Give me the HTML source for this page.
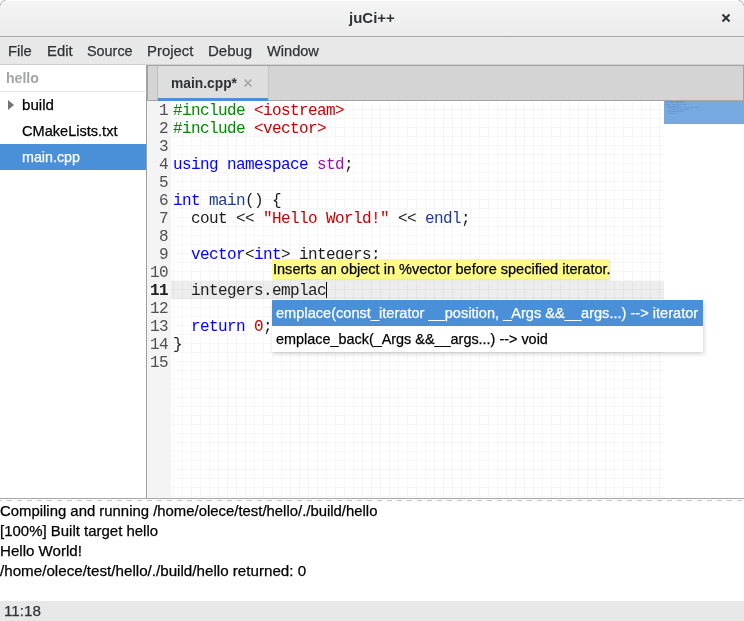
<!DOCTYPE html>
<html><head><meta charset="utf-8">
<style>
*{margin:0;padding:0;box-sizing:border-box}
html,body{width:744px;height:621px;overflow:hidden;background:#fff}
body{position:relative;font-family:"Liberation Sans",sans-serif;color:#000}
.a{position:absolute}
.t{position:absolute;white-space:pre;line-height:20px;will-change:transform;-webkit-text-stroke:0.25px currentColor}
#title{left:0;top:0;width:744px;height:37px;background:linear-gradient(#f5f5f5,#ececec);border-bottom:1px solid #a6a6a6;border-radius:5px 5px 0 0;box-shadow:inset 0 1px #fbfbfb}
#menu{left:0;top:37px;width:744px;height:28px;background:#e8e8e8;border-bottom:1px solid #cfcfcf}
.mi{font-size:14px;color:#2e3436;top:41px}
#side{left:0;top:65px;width:146px;height:433px;background:#fff}
#tabbar{left:146px;top:65px;width:598px;height:36px;background:#d4d4d4;border:1px solid #a3a3a3;border-left:2px solid #a3a3a3}
#tab{left:158px;top:66px;width:110px;height:35px;background:#dedede;border-bottom:3px solid #4a90d9}
#gutter{left:147px;top:101px;width:24px;height:397px;background:#f4f4f4}
#vborder{left:146px;top:65px;width:1px;height:433px;background:#a0a0a0}
#grid{left:171px;top:101px;width:493px;height:397px;
 background-image:linear-gradient(90deg,#f6f6f6 1px,transparent 1px),linear-gradient(#f6f6f6 1px,transparent 1px);
 background-size:9px 9px;background-position:2px 8px}
#hborder{left:0;top:498px;width:744px;height:1px;background:#a8a8a8}
#dash{left:0;top:500px;width:744px;height:1px;background-image:linear-gradient(90deg,#c4c4c4 2px,transparent 2px,transparent 7px,#c4c4c4 7px);background-size:10px 1px}
#status{left:0;top:601px;width:744px;height:20px;background:#e8e8e8}
.code{position:absolute;will-change:transform;left:173px;font-family:"Liberation Mono",monospace;font-size:16px;letter-spacing:-0.6px;line-height:18px;white-space:pre;color:#1e1e1e}
.ln{position:absolute;will-change:transform;left:147px;width:21px;text-align:right;font-family:"Liberation Mono",monospace;font-size:16px;letter-spacing:-0.6px;line-height:18px;color:#505050}
.g{color:#008a00}.r{color:#c80000}.b{color:#0000ff}.p{color:#9a10a8}.nb{color:#1f3b98}
</style></head><body>
<div id="title" class="a"></div>
<svg class="a" style="left:0;top:0" width="744" height="10"><path d="M0.5 5.5A5 5 0 0 1 5.5 0.5M738.5 0.5A5 5 0 0 1 743.5 5.5" fill="none" stroke="#b4b4b4" stroke-width="1"/></svg>
<div class="t" style="left:349px;top:8px;font-size:15px;font-weight:bold;color:#2e3436;-webkit-text-stroke:0">juCi++</div>
<svg class="a" style="left:720px;top:12px" width="12" height="12" viewBox="0 0 12 12"><path d="M2.5 2.5L9.5 9.5M9.5 2.5L2.5 9.5" stroke="#2e3436" stroke-width="2"/></svg>
<div id="menu" class="a"></div>
<div class="t mi" style="left:8px;font-size:14.8px">File</div>
<div class="t mi" style="left:47px;font-size:14.85px">Edit</div>
<div class="t mi" style="left:87px;font-size:14.4px">Source</div>
<div class="t mi" style="left:147px;font-size:14.9px">Project</div>
<div class="t mi" style="left:208px;font-size:15px">Debug</div>
<div class="t mi" style="left:267px;font-size:14.6px">Window</div>

<div id="side" class="a"></div>
<div class="t" style="left:6px;top:68px;font-size:14.1px;font-weight:bold;color:#a2a4a5;-webkit-text-stroke:0">hello</div>
<div class="a" style="left:0;top:91px;width:145px;height:1px;background:#e8e8e8"></div>
<svg class="a" style="left:7px;top:99px" width="8" height="12"><path d="M1 1L7 6L1 11Z" fill="#737373"/></svg>
<div class="t" style="left:22px;top:95px;font-size:15.1px">build</div>
<div class="t" style="left:22px;top:121px;font-size:14.57px">CMakeLists.txt</div>
<div class="a" style="left:0;top:144px;width:146px;height:26px;background:#4a90d9"></div>
<div class="t" style="left:22px;top:147px;font-size:14.3px;color:#fff">main.cpp</div>

<div id="tabbar" class="a"></div>
<div class="a" style="left:157px;top:66px;width:1px;height:34px;background:#bcbcbc"></div>
<div class="a" style="left:268px;top:66px;width:1px;height:34px;background:#c4c4c4"></div>
<div id="tab" class="a"></div>
<div class="t" style="left:171px;top:74px;font-size:13.8px;font-weight:bold;color:#2e3436;-webkit-text-stroke:0">main.cpp*</div>
<svg class="a" style="left:243px;top:78px" width="10" height="10"><path d="M1.5 1.5L8.5 8.5M8.5 1.5L1.5 8.5" stroke="#a4a4a4" stroke-width="1.6"/></svg>

<div id="gutter" class="a"></div>
<div id="grid" class="a"></div>
<div id="vborder" class="a"></div>
<div class="a" style="left:171px;top:281px;width:493px;height:18px;background:rgba(0,0,0,0.07)"></div>

<div class="ln" style="top:102px">1<br>2<br>3<br>4<br>5<br>6<br>7<br>8<br>9<br>10<br><b style="color:#222">11</b><br>12<br>13<br>14<br>15</div>
<div class="code" style="top:102px"><span class="g">#include</span> <span class="r">&lt;iostream&gt;</span>
<span class="g">#include</span> <span class="r">&lt;vector&gt;</span>

<span class="b">using</span> <span class="b">namespace</span> <span class="p">std</span>;

<span class="b">int</span> <span class="nb">main</span>() {
  cout &lt;&lt; <span class="r">"Hello World!"</span> &lt;&lt; <span class="nb">endl</span>;

  <span class="b">vector</span>&lt;<span class="b">int</span>&gt; integers;

  integers.emplac
<span>
</span>  <span class="b">return</span> <span class="r">0</span>;
}
</div>
<div class="a" style="left:326px;top:282px;width:1px;height:16px;background:#000"></div>

<!-- minimap -->
<div class="a" style="left:664px;top:101px;width:80px;height:397px;background:#fff"></div>
<div class="a" style="left:664px;top:101px;width:80px;height:23px;background:#75a9e0"></div>
<svg class="a" style="left:666px;top:101px" width="40" height="16"><g fill="#2a4a8a" fill-opacity="0.15"><rect x="0" y="0" width="8" height="1"/><rect x="9" y="0" width="10" height="1"/><rect x="0" y="1" width="8" height="1"/><rect x="9" y="1" width="8" height="1"/><rect x="0" y="3" width="5" height="1"/><rect x="6" y="3" width="9" height="1"/><rect x="16" y="3" width="4" height="1"/><rect x="0" y="5" width="3" height="1"/><rect x="4" y="5" width="6" height="1"/><rect x="11" y="5" width="1" height="1"/><rect x="2" y="6" width="4" height="1"/><rect x="7" y="6" width="2" height="1"/><rect x="10" y="6" width="6" height="1"/><rect x="17" y="6" width="7" height="1"/><rect x="25" y="6" width="2" height="1"/><rect x="28" y="6" width="5" height="1"/><rect x="2" y="8" width="11" height="1"/><rect x="14" y="8" width="9" height="1"/><rect x="2" y="10" width="15" height="1"/><rect x="2" y="12" width="6" height="1"/><rect x="9" y="12" width="2" height="1"/><rect x="0" y="13" width="1" height="1"/></g></svg>

<!-- tooltip -->
<div class="a" style="left:272px;top:259px;width:337px;height:20px;background:#fdfa8a;box-shadow:1px 1px 2px rgba(0,0,0,0.15)"></div>
<div class="t" style="left:273px;top:259px;font-size:14.54px;color:#000">Inserts an object in %vector before specified iterator.</div>

<!-- completion -->
<div class="a" style="left:272px;top:300px;width:431px;height:52px;background:#fff;box-shadow:1px 2px 4px rgba(0,0,0,0.18)"></div>
<div class="a" style="left:272px;top:300px;width:431px;height:26px;background:#4a90d9"></div>
<div class="t" style="left:276px;top:303px;font-size:14.6px;color:#fff">emplace(const_iterator __position, _Args &amp;&amp;__args...) --&gt; iterator</div>
<div class="t" style="left:276px;top:329px;font-size:14.42px;color:#000">emplace_back(_Args &amp;&amp;__args...) --&gt; void</div>

<div id="hborder" class="a"></div>
<div id="dash" class="a"></div>
<div class="t" style="left:0px;top:501px;font-size:14.9px">Compiling and running /home/olece/test/hello/./build/hello</div>
<div class="t" style="left:0px;top:521px;font-size:14.97px">[100%] Built target hello</div>
<div class="t" style="left:0px;top:541px;font-size:15.1px">Hello World!</div>
<div class="t" style="left:0px;top:561px;font-size:15.18px">/home/olece/test/hello/./build/hello returned: 0</div>
<div id="status" class="a"></div>
<div class="t" style="left:4px;top:601px;font-size:15.2px;color:#2e3436">11:18</div>
</body></html>
